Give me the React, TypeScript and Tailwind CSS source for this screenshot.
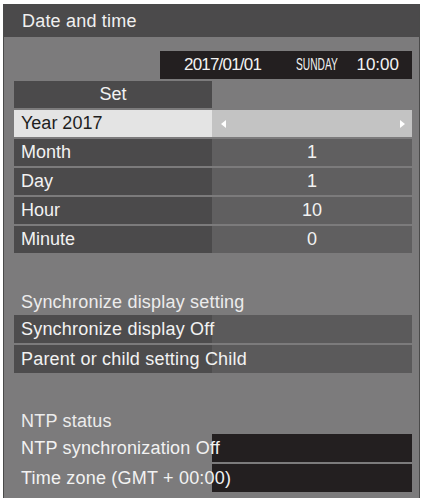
const font = { fontFamily: '"Liberation Sans", Arial, sans-serif' };

const valueRows = [
  { label: 'Month', value: '1' },
  { label: 'Day', value: '1' },
  { label: 'Hour', value: '10' },
  { label: 'Minute', value: '0' },
];

function SplitRow({ label, value }: { label: string; value: string }) {
  return (
    <div className="flex h-[27px] text-[18px] leading-[27px] text-[#f2f2f2]">
      <div className="w-[198px] bg-[#4b4a4b] pl-[7px]">{label}</div>
      <div className="flex-1 bg-[#605f60] text-center">{value}</div>
    </div>
  );
}

function WideRow({ text, dark }: { text: string; dark?: boolean }) {
  return (
    <div
      className={`h-[28px] whitespace-nowrap pl-[7px] text-[18px] leading-[28px] tracking-[0.2px] text-[#f2f2f2] ${
        dark
          ? 'bg-[linear-gradient(to_right,transparent_198px,#231f20_198px)]'
          : 'bg-[linear-gradient(to_right,#4d4c4d_198px,#5b5a5b_198px)]'
      }`}
    >
      {text}
    </div>
  );
}

export default function App() {
  return (
    <div className="h-[498px] w-[423px] overflow-hidden bg-white pl-[3px] pt-[4px]" style={font}>
      <div className="h-[500px] w-[417px] border border-[#4a4a4a] bg-[#7c7b7c]">
        {/* title bar */}
        <div className="h-[32px] bg-[#4b4a4b] pl-[18px] text-[18px] leading-[32px] tracking-[0.2px] text-[#f0f0f0]">
          Date and time
        </div>

        <div className="pl-[10px] pr-[7px]">
          {/* current date */}
          <div className="mt-[14px] ml-[146px] flex h-[28px] items-center bg-[#231f20] pr-[13px] text-[#f2f2f2]">
            <span className="ml-[24px] text-[17px] tracking-[-0.8px]">2017/01/01</span>
            <span className="ml-[35px] w-[42px] min-w-0 shrink-0 whitespace-nowrap">
              <span className="inline-block origin-left scale-x-[0.6] text-[17px] leading-none">SUNDAY</span>
            </span>
            <span className="ml-auto text-[17px]">10:00</span>
          </div>

          <div className="mt-[2px] flex flex-col gap-[2px]">
            <div className="flex h-[27px] text-[18px] leading-[27px] text-[#f2f2f2]">
              <div className="w-[198px] bg-[#4b4a4b] text-center">Set</div>
            </div>

            <div className="flex h-[27px] text-[18px] leading-[27px]">
              <div className="w-[198px] bg-[#e4e4e4] pl-[7px] text-[#1e1e1e]">Year 2017</div>
              <div className="flex flex-1 items-center justify-between bg-[#c3c3c3] pl-[9px] pr-[7px]">
                <span className="h-0 w-0 border-y-[4px] border-r-[5px] border-y-transparent border-r-white" />
                <span className="h-0 w-0 border-y-[4px] border-l-[5px] border-y-transparent border-l-white" />
              </div>
            </div>

            {valueRows.map((r) => (
              <SplitRow key={r.label} label={r.label} value={r.value} />
            ))}
          </div>

          <div className="mt-[38px] h-[22px] pl-[7px] text-[18px] leading-[22px] tracking-[0.2px] text-[#ececec]">
            Synchronize display setting
          </div>
          <div className="mt-[2px] flex flex-col gap-[2px]">
            <WideRow text="Synchronize display Off" />
            <WideRow text="Parent or child setting Child" />
          </div>

          <div className="mt-[37px] h-[22px] pl-[7px] text-[18px] leading-[22px] tracking-[0.2px] text-[#ececec]">
            NTP status
          </div>
          <div className="mt-[2px] flex flex-col gap-[2px]">
            <WideRow text="NTP synchronization Off" dark />
            <WideRow text="Time zone (GMT + 00:00)" dark />
          </div>
        </div>
      </div>
    </div>
  );
}
